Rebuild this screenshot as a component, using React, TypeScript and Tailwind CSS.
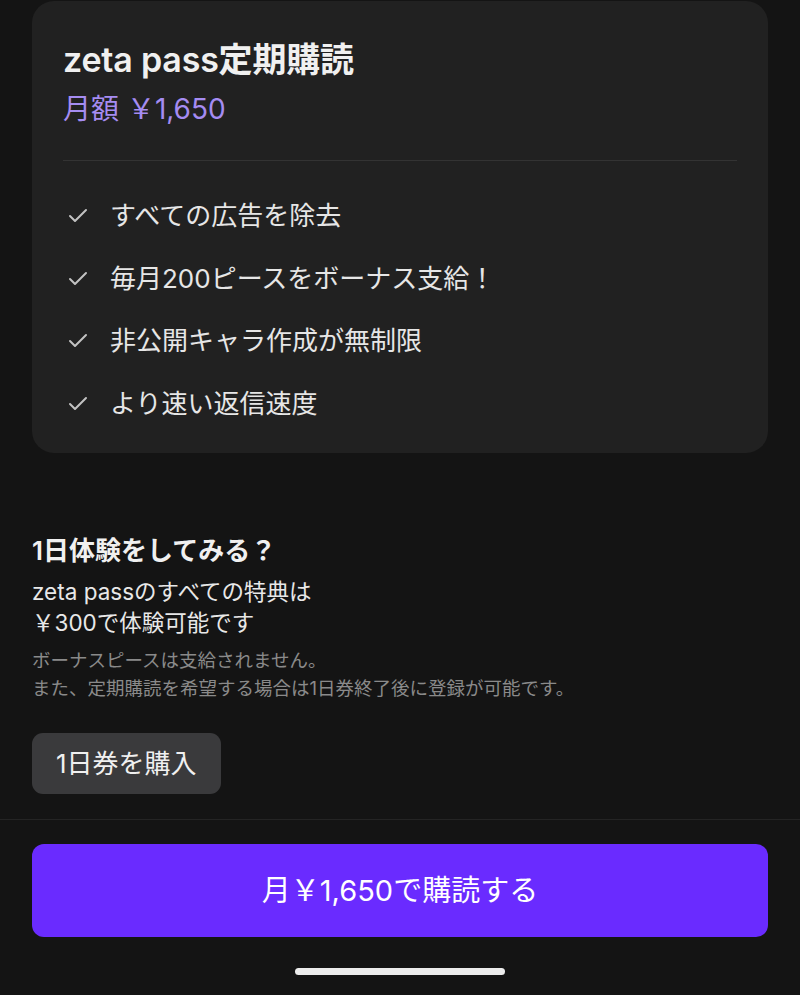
import { Check } from 'lucide-react';

const benefits = [
  'すべての広告を除去',
  '毎月200ピースをボーナス支給！',
  '非公開キャラ作成が無制限',
  'より速い返信速度',
];

export default function App() {
  return (
    <div
      className="flex h-[995px] w-full flex-col overflow-hidden bg-[#141414] text-[#ececec]"
      style={{ fontFamily: '"Inter", "Noto Sans CJK JP", sans-serif' }}
    >
      <div className="px-8">
        {/* プラン情報カード */}
        <div className="mt-[1px] rounded-[22px] bg-[#212121] px-[31px] pb-[18px] pt-[39px]">
          <h1 className="text-[34px] font-semibold leading-[40px] tracking-[-0.2px] text-[#f0f0f0]">zeta pass定期購読</h1>
          <p className="mt-[11px] text-[28px] leading-[36px] text-[#a58cf2]">月額 ￥1,650</p>
          <div className="mt-[33px] h-px bg-[#333333]" />
          <ul className="pt-[24px]">
            {benefits.map(b => (
              <li key={b} className="flex h-[62.5px] items-center">
                <Check className="ml-[3px] h-[24px] w-[24px] text-[#c2c2c2]" strokeWidth={2} />
                <span className="ml-[20px] text-[26px] leading-[32px] text-[#e6e6e6]">{b}</span>
              </li>
            ))}
          </ul>
        </div>

        {/* 1日体験 */}
        <h2 className="mt-[82px] text-[26px] font-semibold leading-[32px] text-[#f0f0f0]">1日体験をしてみる？</h2>
        <p className="mt-[9px] text-[22.5px] leading-[31px] text-[#e8e8e8]">
          zeta passのすべての特典は
          <br />
          ￥300で体験可能です
        </p>
        <p className="mt-[8px] text-[18.5px] leading-[28px] text-[#8a8a8a]">
          ボーナスピースは支給されません。
          <br />
          また、定期購読を希望する場合は1日券終了後に登録が可能です。
        </p>
        <button className="mt-[31px] h-[61px] rounded-[11px] bg-[#3a3a3c] px-[24px] text-[26px] text-[#f0f0f0]">
          1日券を購入
        </button>
      </div>

      <div className="mt-[25px] h-px bg-[#242424]" />

      <div className="px-8 pt-[24px]">
        <button className="flex h-[93px] w-full items-center justify-center rounded-[12px] bg-[#6a2bff] text-[29px] text-white">
          月￥1,650で購読する
        </button>
      </div>

      <div className="mt-[31px] flex justify-center">
        <div className="h-[7px] w-[210px] rounded-full bg-[#ececec]" />
      </div>
    </div>
  );
}
